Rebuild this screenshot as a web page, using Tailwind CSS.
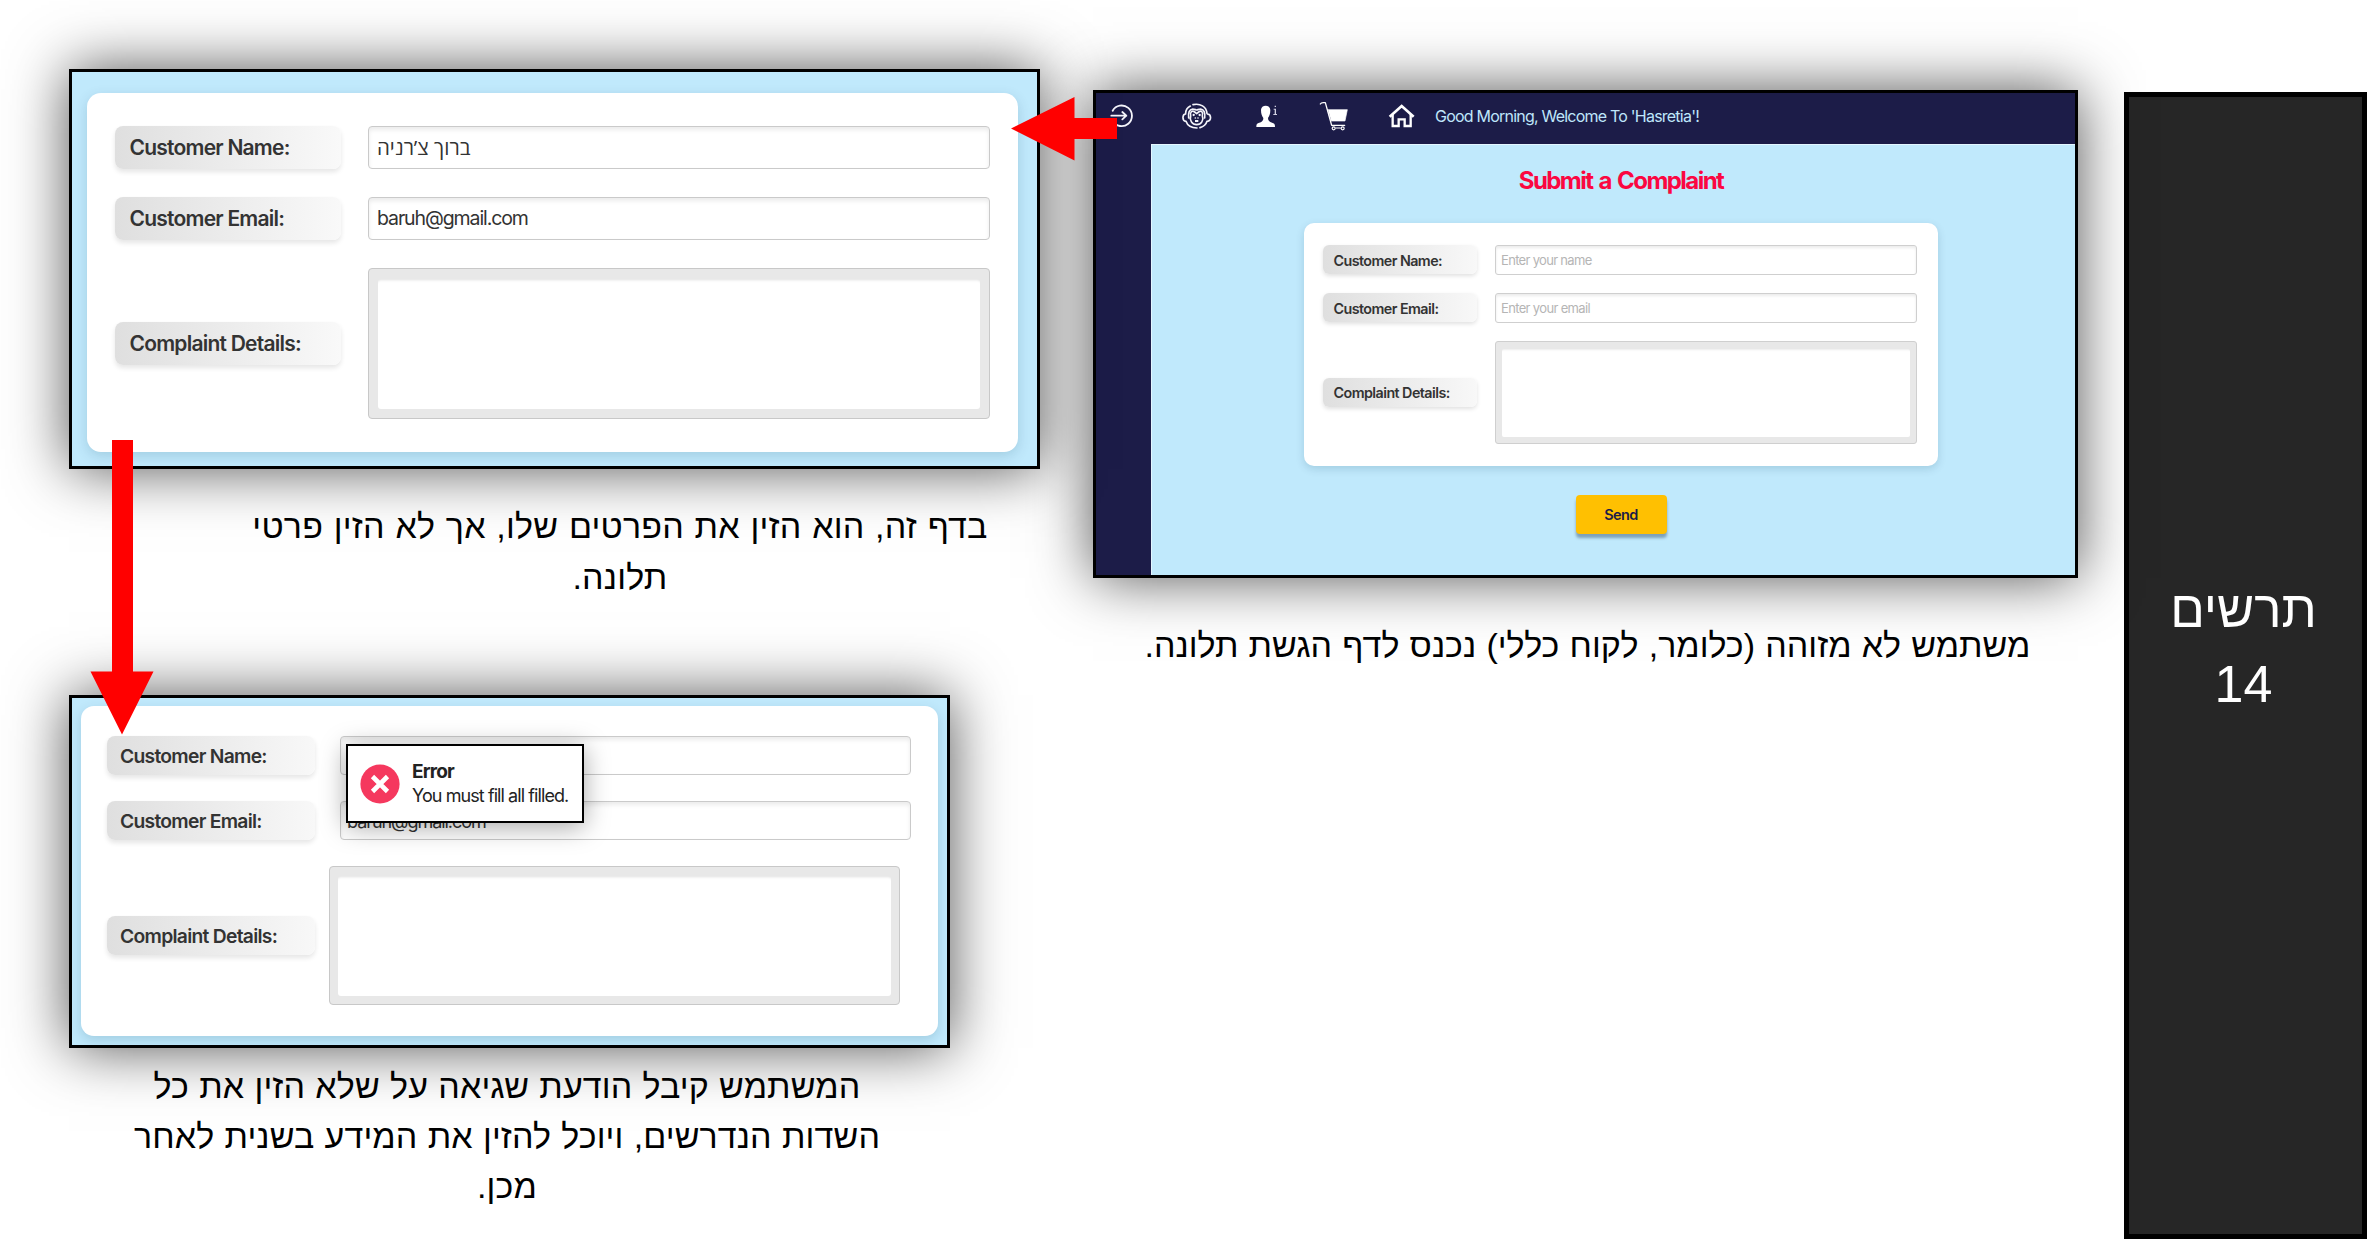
<!DOCTYPE html>
<html lang="he">
<head>
<meta charset="utf-8">
<title>תרשים 14</title>
<script src="https://cdn.jsdelivr.net/npm/@tailwindcss/browser@4"></script>
</head>
<body class="bg-white overflow-hidden font-['Liberation_Sans','Noto_Sans',sans-serif]">
<div class="flex w-[2367px] h-[1239px] items-end">

  <main class="relative w-[2124px] h-[1239px] shrink-0">

    <!-- Complaint page -->
    <section class="absolute left-[1093px] top-[90px] w-[985px] h-[488px] border-3 border-black bg-[#1c1c48] shadow-[0_0_56px_rgba(0,0,0,0.68)] font-['Inter',sans-serif] flex flex-col">
      <header class="h-[51px] shrink-0 pl-[13px] pt-2 flex items-start text-white">
        <svg class="w-[26px] h-[30px] shrink-0" viewBox="42 27 78 90" fill="none" stroke="#f4f4fa" stroke-width="5.5" stroke-linecap="round" stroke-linejoin="round"><path d="M53 56A31 31 0 1 1 53 87M49 71H94M82 60L94 71L82 82"/></svg>
        <svg class="w-[31px] h-[30px] shrink-0 ml-[46px]" viewBox="258 27 93 90" fill="none" stroke="#f4f4fa" stroke-width="5" stroke-linecap="round" stroke-linejoin="round"><path d="M294 38C316 33 334 44 336 64M286 42C276 47 272 54 272 64M272 66C262 66 260 86 273 88M337 66C349 66 351 86 336 88M273 88C277 100 290 108 306 108M315 107C326 104 333 98 336 88M281 78C279 62 283 52 293 51C299 51 302 54 305 54C308 54 311 51 317 51C327 52 331 62 329 78M287 72C284 60 292 54 299 60L305 65L311 60C319 54 325 60 322 72C327 84 319 98 305 98C291 98 283 84 287 72"/><g fill="#f4f4fa" stroke="none"><circle cx="296" cy="69" r="3.5"/><circle cx="314" cy="69" r="3.5"/><circle cx="301" cy="78" r="2.5"/><circle cx="309" cy="78" r="2.5"/><rect x="300" y="84" width="10" height="6"/></g></svg>
        <svg class="w-6 h-[30px] shrink-0 ml-[43px]" viewBox="480 27 72 90" fill="#fff"><path d="M498 54C498 37 526 37 526 54C526 66 523 72 519 78C519 88 525 90 535 94C539 96 540 99 540 105H484C484 99 485 96 489 94C499 90 505 88 505 78C501 72 498 66 498 54Z"/><path d="M539 41h4v4h-4zM536 50h7v16h3v3h-11v-3h4v-13h-3z" fill="#d0d0e0"/></svg>
        <svg class="w-8 h-[30px] shrink-0 ml-[39px]" viewBox="670 27 96 90" fill="none" stroke="#fff" stroke-linecap="round" stroke-linejoin="round"><path d="M677 36C679 32 682 32 686 32H692L711 100H750" stroke-width="4"/><path d="M700 53H758L751 87H710Z" fill="#fff" stroke-width="2"/><g stroke-width="3.5"><circle cx="717" cy="109" r="4.5"/><circle cx="744" cy="109" r="4.5"/><path d="M724 108H737"/></g></svg>
        <svg class="w-[27px] h-[30px] shrink-0 ml-[38px]" viewBox="879 27 81 90" fill="none" stroke="#fff" stroke-width="7"><path d="M884 74L920 42L956 74" stroke-width="8"/><path d="M893 67V102H911V82H929V102H947V67"/></svg>
        <p class="ml-5 mt-[3px] text-base leading-6 tracking-[-0.78px] whitespace-nowrap text-[#bfe6fb]">Good Morning, Welcome To 'Hasretia'!</p>
      </header>
      <div class="flex-1 ml-[55px] pl-[15px] bg-[#c0e9fc] border-t border-l border-[#e4f6ff] flex flex-col items-center">
        <h1 class="mt-[22px] text-[24px] leading-7 font-bold tracking-[-1.55px] [word-spacing:2px] text-[#fb0741] whitespace-nowrap">Submit a Complaint</h1>
        <div class="mt-[28px] w-[634px] h-[243px] shrink-0 rounded-[10px] bg-white shadow-[0_3px_9px_rgba(0,60,90,0.16)] pl-[19px] pt-[22px] grid grid-cols-[154px_422px] gap-x-[18px] gap-y-[18.5px] content-start items-center text-[14.3px] font-semibold tracking-[-0.55px] text-[#333]">
          <label class="h-[29px] pl-[10.5px] pt-px flex items-center rounded-md bg-linear-to-r from-[#dfdfdf] to-[#f8f8f8] shadow-[0_2px_4px_rgba(0,0,0,0.12)]">Customer Name:</label>
          <div class="h-[29.5px] pl-[5px] pt-px flex items-center rounded-[3px] border border-[#cfcfcf] bg-white shadow-[inset_0_2px_3px_rgba(0,0,0,0.08)] text-[13px] font-normal tracking-[-0.68px] text-[#b5b5b5]">Enter your name</div>
          <label class="h-[29px] pl-[10.5px] pt-px flex items-center rounded-md bg-linear-to-r from-[#dfdfdf] to-[#f8f8f8] shadow-[0_2px_4px_rgba(0,0,0,0.12)]">Customer Email:</label>
          <div class="h-[29.5px] pl-[5px] pt-px flex items-center rounded-[3px] border border-[#cfcfcf] bg-white shadow-[inset_0_2px_3px_rgba(0,0,0,0.08)] text-[13px] font-normal tracking-[-0.65px] text-[#b5b5b5]">Enter your email</div>
          <label class="h-[29px] pl-[10.5px] pt-px flex items-center rounded-md bg-linear-to-r from-[#dfdfdf] to-[#f8f8f8] shadow-[0_2px_4px_rgba(0,0,0,0.12)]">Complaint Details:</label>
          <div class="h-[103px] p-[6px] pt-[7px] rounded-[3px] border border-[#cfcfcf] bg-[#e8e8e8]"><div class="h-full bg-white rounded-[2px] shadow-[inset_0_3px_2px_-2px_rgba(0,0,0,0.08)]"></div></div>
        </div>
        <button class="mt-[29px] w-[91px] h-[39px] shrink-0 rounded-[4px] bg-[#ffc001] text-[14.5px] font-semibold tracking-[-0.6px] text-[#1c1c48] shadow-[0_4px_3px_rgba(0,30,60,0.35)]">Send</button>
      </div>
    </section>

    <!-- Filled-in form -->
    <section class="absolute left-[69px] top-[69px] w-[971px] h-[400px] border-3 border-black bg-[#c0e9fc] shadow-[0_0_56px_rgba(0,0,0,0.68)] font-['Inter',sans-serif]">
      <div class="ml-[15px] mt-[21px] w-[931px] h-[359px] rounded-[14px] bg-white shadow-[0_4px_13px_rgba(0,60,90,0.16)] pl-[28px] pt-[33px] grid grid-cols-[226px_622px] gap-x-[27px] gap-y-[28px] content-start items-center text-[21px] font-semibold tracking-[-0.77px] text-[#333]">
        <label class="h-[42.5px] pl-[14.5px] pt-px flex items-center rounded-lg bg-linear-to-r from-[#dfdfdf] to-[#f9f9f9] shadow-[0_3px_5px_rgba(0,0,0,0.1)]">Customer Name:</label>
        <div class="h-[43px] pl-[8px] flex items-center rounded-[4px] border-[1.5px] border-[#cacaca] bg-white shadow-[inset_0_3px_4px_rgba(0,0,0,0.08)]"><span dir="rtl" class="font-['Open_Sans',sans-serif] text-[20.5px] font-normal tracking-normal">ברוך צ’רניה</span></div>
        <label class="h-[42.5px] pl-[14.5px] pt-px flex items-center rounded-lg bg-linear-to-r from-[#dfdfdf] to-[#f9f9f9] shadow-[0_3px_5px_rgba(0,0,0,0.1)]">Customer Email:</label>
        <div class="h-[43px] pl-[8px] pt-px flex items-center rounded-[4px] border-[1.5px] border-[#cacaca] bg-white shadow-[inset_0_3px_4px_rgba(0,0,0,0.08)] text-[19.5px] font-normal tracking-[-1.1px]">baruh@gmail.com</div>
        <label class="h-[42.5px] pl-[14.5px] pt-px flex items-center rounded-lg bg-linear-to-r from-[#dfdfdf] to-[#f9f9f9] shadow-[0_3px_5px_rgba(0,0,0,0.1)]">Complaint Details:</label>
        <div class="h-[151px] p-[9px] pt-[10px] pb-[9px] rounded-[4px] border-[1.5px] border-[#c8c8c8] bg-[#e8e8e8]"><div class="h-full bg-white rounded-[3px] shadow-[inset_0_4px_3px_-3px_rgba(0,0,0,0.12)]"></div></div>
      </div>
    </section>

    <!-- Form with validation error -->
    <section class="absolute left-[69px] top-[695px] w-[881px] h-[353px] border-3 border-black bg-[#c0e9fc] shadow-[0_0_56px_rgba(0,0,0,0.68)] font-['Inter',sans-serif]">
      <div class="ml-[9px] mt-[8px] w-[857px] h-[330px] rounded-[13px] bg-white shadow-[0_4px_12px_rgba(0,60,90,0.16)] pl-[26px] pt-[30px] grid grid-cols-[207.5px_571px] gap-x-[25.5px] gap-y-[26px] content-start items-center text-[19.3px] font-semibold tracking-[-0.72px] text-[#333]">
        <label class="h-[39px] pl-[13px] pt-[2px] flex items-center rounded-lg bg-linear-to-r from-[#dfdfdf] to-[#f8f8f8] shadow-[0_3px_5px_rgba(0,0,0,0.1)]">Customer Name:</label>
        <div class="h-[39px] rounded-[4px] border-[1.5px] border-[#cacaca] bg-white shadow-[inset_0_3px_4px_rgba(0,0,0,0.08)]"></div>
        <label class="h-[39px] pl-[13px] pt-[2px] flex items-center rounded-lg bg-linear-to-r from-[#dfdfdf] to-[#f8f8f8] shadow-[0_3px_5px_rgba(0,0,0,0.1)]">Customer Email:</label>
        <div class="h-[39px] pl-[6px] pt-[2px] flex items-center rounded-[4px] border-[1.5px] border-[#cacaca] bg-white shadow-[inset_0_3px_4px_rgba(0,0,0,0.08)] text-[18px] font-normal tracking-[-1.05px]">baruh@gmail.com</div>
        <label class="h-[39px] pl-[13px] pt-[2px] flex items-center rounded-lg bg-linear-to-r from-[#dfdfdf] to-[#f8f8f8] shadow-[0_3px_5px_rgba(0,0,0,0.1)]">Complaint Details:</label>
        <div class="-ml-[11px] w-[571px] h-[139px] p-[8px] pt-[9px] rounded-[4px] border-[1.5px] border-[#c8c8c8] bg-[#e8e8e8]"><div class="h-full bg-white rounded-[3px] shadow-[inset_0_4px_3px_-3px_rgba(0,0,0,0.12)]"></div></div>
      </div>
      <div class="absolute left-[274px] top-[46px] w-[238px] h-[79px] border-2 border-black bg-white shadow-[0_4px_26px_rgba(0,0,0,0.35)] pl-3 flex items-center text-[#222]">
        <svg class="size-10 shrink-0" viewBox="0 0 40 40"><circle cx="20" cy="20" r="19.6" fill="#f5385e"/><path d="M12.5 12.5L27.5 27.5M27.5 12.5L12.5 27.5" stroke="#fff" stroke-width="4.6"/></svg>
        <div class="ml-[12px] pt-px whitespace-nowrap leading-6">
          <p class="text-[19px] font-bold tracking-[-0.85px]">Error</p>
          <p class="text-[18px] tracking-[-0.92px]">You must fill all filled.</p>
        </div>
      </div>
    </section>

    <!-- Captions -->
    <p dir="rtl" class="absolute left-[1093px] top-[620px] w-[989px] text-center text-[34px] leading-[50px] [word-spacing:0.75px] text-black whitespace-nowrap">משתמש לא מזוהה (כלומר, לקוח כללי) נכנס לדף הגשת תלונה.</p>
    <p dir="rtl" class="absolute left-[220px] top-[501px] w-[800px] text-center text-[34px] leading-[51px] tracking-[0.2px] [word-spacing:1px] text-black whitespace-nowrap">בדף זה, הוא הזין את הפרטים שלו, אך לא הזין פרטי<br>תלונה.</p>
    <p dir="rtl" class="absolute left-[107px] top-[1061px] w-[800px] text-center text-[34px] leading-[50px] tracking-[0.1px] [word-spacing:0.7px] text-black whitespace-nowrap">המשתמש קיבל הודעת שגיאה על שלא הזין את כל<br>השדות הנדרשים, ויוכל להזין את המידע בשנית לאחר<br>מכן.</p>

    <!-- Arrows between the steps -->
    <svg class="absolute left-[1011px] top-[97px] w-[106px] h-[64px]" viewBox="0 0 106 64" fill="#f00"><path d="M0 31.5L63.5 0V21H106V42H63.5V63.5Z"/></svg>
    <svg class="absolute left-[90px] top-[440px] w-[64px] h-[295px]" viewBox="0 0 64 295" fill="#f00"><path d="M32 294.5L0.5 231.5H22V0H43V231.5H63.5Z"/></svg>
  </main>

  <aside dir="rtl" class="w-[243px] h-[1147px] shrink-0 border-5 border-black bg-[#262626] text-white text-center text-[52px] leading-[75px] pt-[475px]">
    <h2 class="-translate-x-[2px]"><span class="text-[51px]">תרשים</span><br>14</h2>
  </aside>
</div>
</body>
</html>
